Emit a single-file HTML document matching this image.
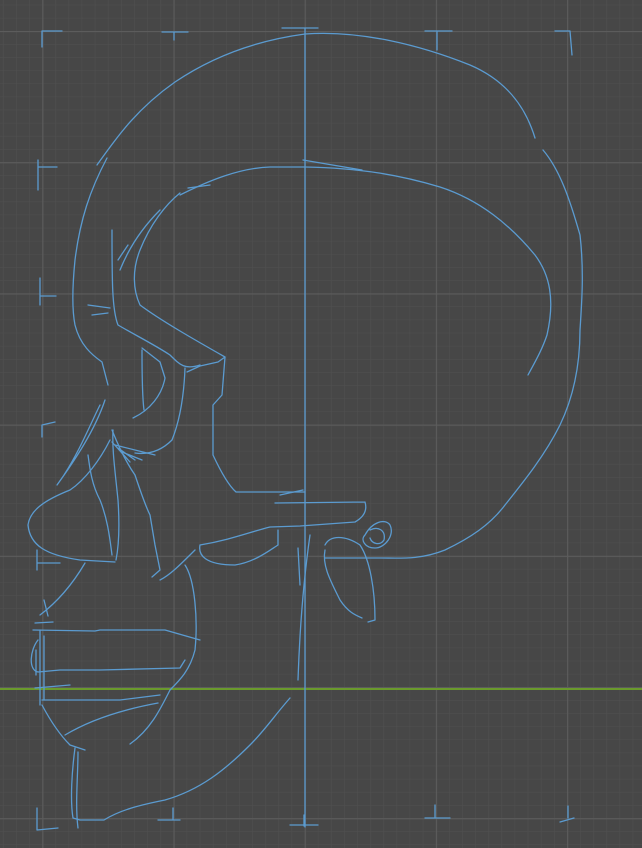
<!DOCTYPE html>
<html><head><meta charset="utf-8"><style>
html,body{margin:0;padding:0;background:#474747;width:642px;height:848px;overflow:hidden}
svg{display:block}
</style></head><body>
<svg width="642" height="848" viewBox="0 0 642 848" xmlns="http://www.w3.org/2000/svg">
<defs>
<pattern id="minor" x="42.3" y="31" width="13.12" height="13.12" patternUnits="userSpaceOnUse">
<path d="M0 0H13.12M0 0V13.12" stroke="#505050" stroke-width="1" fill="none"/>
</pattern>
<pattern id="major" x="42.3" y="31" width="131.2" height="131.2" patternUnits="userSpaceOnUse">
<path d="M0 0.5H131.2M0.5 0V131.2" stroke="#5c5c5c" stroke-width="1.2" fill="none"/>
</pattern>
</defs>
<rect width="642" height="848" fill="#474747"/>
<rect width="642" height="848" fill="url(#minor)"/>
<rect width="642" height="848" fill="url(#major)"/>
<line x1="0" y1="689" x2="642" y2="689" stroke="#6a9a2c" stroke-width="2"/>
<g fill="none" stroke="#5b9bd0" stroke-width="1.3" stroke-linecap="round" stroke-linejoin="round">
<!-- markers -->
<path d="M42 47V31H62M174 32V40M162 32H188M437 32V50M425 31H452M555 31H570L572 55"/>
<path d="M38 190V160M38 167H57M40 278V305M40 296H56M42 437V425L55 422M37 550V570M38 563H60M44 600L48 616"/>
<path d="M37 808V830L58 828M158 820H180M173 808V820M290 825H318M304 815V826M425 818H450M435 805V818M560 822L574 818M568 806V818"/>
<!-- vertical center line -->
<path d="M305 28V827M282 28H318"/>
<!-- skull outer -->
<path d="M97 165C115 140 135 110 175 82C215 55 260 40 305 34C360 30 420 45 470 65C505 80 525 105 535 138"/>
<path d="M543 150C560 170 570 200 580 235C584 270 582 300 580 330C580 370 572 400 560 425C545 455 525 480 505 505C490 525 470 538 445 550C420 560 400 558 380 558H325"/>
<!-- inner cranium -->
<path d="M180 195C210 180 240 168 270 167H305C360 168 400 175 440 187C480 200 510 225 535 255C550 275 555 300 547 335C542 350 535 362 528 375"/>
<path d="M303 160L362 170"/>
<!-- forehead / front -->
<path d="M107 158C90 190 80 220 75 260C72 290 72 310 75 325C80 345 92 355 102 362L108 385"/>
<path d="M112 230C112 280 112 310 118 325C135 335 155 345 170 355C180 365 185 370 200 365"/>
<path d="M180 193C165 205 150 225 140 250C132 270 133 290 140 305C160 320 195 340 225 357"/>
<path d="M188 188L210 185M160 210C145 225 130 245 120 270M118 260L128 245M88 305L110 308M92 315L108 313"/>
<!-- orbit -->
<path d="M142 348L160 362L165 378C162 395 150 410 133 418"/>
<path d="M142 350C142 370 142 395 144 410"/>
<path d="M185 368C184 395 180 420 172 440C162 450 150 455 135 453"/>
<path d="M187 372L200 366L218 362L225 357L222 395L213 405V455C220 470 228 485 236 492H305"/>
<path d="M280 495L303 490M275 503L365 502M365 502C368 512 362 518 355 522L300 526L270 527C250 532 230 540 200 545"/>
<!-- ear -->
<path d="M365 535C372 522 385 518 390 525C395 535 385 548 375 548C365 548 360 540 365 535Z"/>
<path d="M370 530C378 526 386 530 384 540C380 546 372 544 370 538"/>
<path d="M325 545C330 535 345 535 360 545C370 560 375 590 375 620L368 622"/>
<path d="M325 550C322 565 330 580 340 600C348 612 355 615 362 618"/>
<path d="M310 535C305 570 300 620 298 680"/>
<path d="M298 548L300 585"/>
<!-- cheek / zygoma -->
<path d="M200 545C198 555 205 565 235 565C255 562 270 550 278 545V530"/>
<path d="M110 440C100 460 85 480 70 490C45 500 30 510 28 525C30 545 45 555 80 560L115 562"/>
<path d="M113 430C112 450 115 470 118 500C120 530 118 550 116 560"/>
<path d="M112 430C120 450 128 465 135 475C140 490 145 505 150 515L155 545L160 570L152 577"/>
<path d="M112 442L130 462M118 448L135 460M115 445L155 455M122 452L142 460"/>
<path d="M88 455C90 470 92 485 100 500C108 520 110 540 112 555"/>
<path d="M57 485C75 460 95 430 105 400M64 475C80 450 90 425 100 405"/>
<!-- maxilla & teeth -->
<path d="M160 580C170 575 180 565 195 550M185 565C195 580 198 620 195 650C190 670 180 680 170 690C160 710 150 730 130 744"/>
<path d="M85 563C75 580 60 600 40 615M53 622L35 623"/>
<path d="M33 630L95 631L100 630H165L200 640"/>
<path d="M38 640C30 650 28 670 38 672L60 670H100L180 668L185 660"/>
<path d="M35 688L70 685"/>
<path d="M42 700L80 700H120L160 695"/>
<path d="M42 705C50 720 60 735 70 745L85 750M65 735C90 720 120 710 158 703"/>
<path d="M40 630V705M44 636V700M36 650V675"/>
<!-- jaw -->
<path d="M75 748C72 770 70 800 73 818L80 820H104C120 810 140 805 165 800C200 790 225 770 250 745C265 730 275 715 290 698"/>
<path d="M78 752C78 775 75 805 78 828"/>
</g>
</svg>
</body></html>
